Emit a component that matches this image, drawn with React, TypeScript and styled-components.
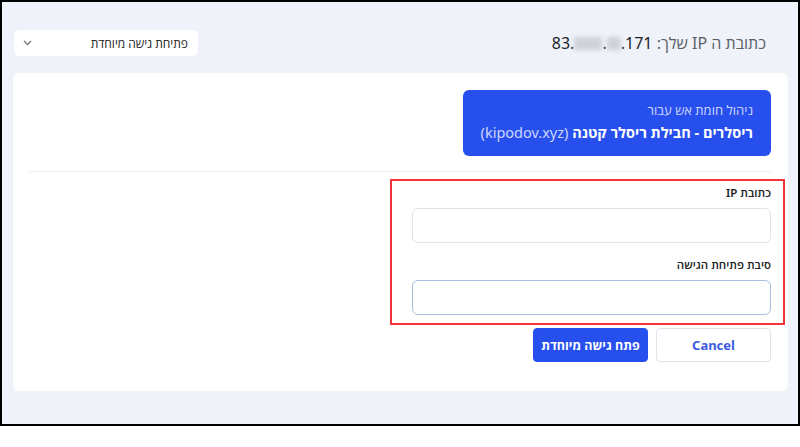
import React from 'react';
import styled, { createGlobalStyle } from 'styled-components';

const GlobalStyle = createGlobalStyle`
  html, body {
    margin: 0;
    padding: 0;
    background: #ffffff;
  }
  * {
    box-sizing: border-box;
  }
  body {
    font-family: "Noto Sans", "Open Sans", "DejaVu Sans", sans-serif;
  }
`;

const Frame = styled.div`
  width: 800px;
  height: 426px;
  border: 2px solid #000;
  background: #eff2f9;
  padding: 28px 10px 0 11px;
  display: flex;
  flex-direction: column;
  gap: 17px;
`;

const TopBar = styled.div`
  display: flex;
  align-items: center;
  justify-content: space-between;
  height: 26px;
  padding-right: 22px;
`;

const IpLine = styled.div`
  font-size: 16px;
  color: #5b5f66;
  white-space: nowrap;
  .value {
    color: #1f2329;
    unicode-bidi: isolate;
  }
`;

const Blur = styled.span<{ $w: number }>`
  display: inline-block;
  width: ${(p) => p.$w}px;
  height: 13px;
  background: #cfd2d8;
  filter: blur(2px);
  vertical-align: -1px;
`;

const Dropdown = styled.div`
  width: 184px;
  height: 26px;
  margin-left: 1px;
  background: #fff;
  border-radius: 5px;
  display: flex;
  align-items: center;
  justify-content: space-between;
  padding: 0 10px 0 9px;
  font-size: 12px;
  font-weight: 500;
  color: #222;
`;

const Card = styled.div`
  background: #fff;
  border-radius: 6px;
  height: 318px;
  padding: 17px 17px 0 16px;
  display: flex;
  flex-direction: column;
`;

const Banner = styled.div`
  align-self: flex-start;
  width: 308px;
  height: 66px;
  background: #274fee;
  border-radius: 6px;
  padding: 12px 18px 0;
  color: #fff;
  display: flex;
  flex-direction: column;
  gap: 4px;
`;

const BannerSub = styled.div`
  font-size: 13px;
  color: #cdd7ff;
  line-height: 17px;
`;

const BannerTitle = styled.div`
  font-size: 14.5px;
  font-weight: 700;
  line-height: 18px;
  white-space: nowrap;
  .domain {
    font-weight: 400;
    color: #cdd7ff;
  }
`;

const Divider = styled.hr`
  border: 0;
  border-top: 1px solid #eceef2;
  margin: 15px 0 0;
`;

const Form = styled.div`
  position: relative;
  align-self: flex-start;
  width: 359px;
  margin-top: 14px;
  display: flex;
  flex-direction: column;
`;

const Highlight = styled.div`
  position: absolute;
  top: -7px;
  right: -14px;
  left: -22px;
  height: 146px;
  border: 2px solid #f2333a;
  pointer-events: none;
`;

const Label = styled.label`
  font-size: 11.5px;
  font-weight: 600;
  color: #222;
  line-height: 14px;
  margin-bottom: 8px;
`;

const Input = styled.input<{ $focused?: boolean }>`
  height: 35px;
  width: 100%;
  border: 1px solid ${(p) => (p.$focused ? '#a7bfe2' : '#dfe4ec')};
  border-radius: 6px;
  margin-bottom: 15px;
  outline: none;
  font: inherit;
`;

const Buttons = styled.div`
  display: flex;
  gap: 8px;
  margin-top: -2px;
`;

const Button = styled.button<{ $primary?: boolean }>`
  width: 115px;
  height: 34px;
  border-radius: 4px;
  font-family: inherit;
  font-weight: 700;
  font-size: ${(p) => (p.$primary ? '12.5px' : '13px')};
  background: ${(p) => (p.$primary ? '#274fee' : '#fff')};
  color: ${(p) => (p.$primary ? '#fff' : '#3d5be0')};
  border: 1px solid ${(p) => (p.$primary ? '#274fee' : '#dfe3ee')};
  cursor: pointer;
`;

const Chevron = () => (
  <svg width="9" height="6" viewBox="0 0 9 6" fill="none">
    <path d="M1 1l3.5 3.5L8 1" stroke="#777" strokeWidth="1.3" />
  </svg>
);

export default function App() {
  return (
    <>
      <GlobalStyle />
      <Frame dir="rtl">
        <TopBar>
          <IpLine>
            כתובת ה IP שלך:{' '}
            <span className="value" dir="ltr">
              83.<Blur $w={28} />.<Blur $w={14} />.171
            </span>
          </IpLine>
          <Dropdown>
            <span>פתיחת גישה מיוחדת</span>
            <Chevron />
          </Dropdown>
        </TopBar>
        <Card>
          <Banner>
            <BannerSub>ניהול חומת אש עבור</BannerSub>
            <BannerTitle>
              ריסלרים - חבילת ריסלר קטנה <span className="domain">(kipodov.xyz)</span>
            </BannerTitle>
          </Banner>
          <Divider />
          <Form>
            <Highlight />
            <Label>כתובת IP</Label>
            <Input />
            <Label>סיבת פתיחת הגישה</Label>
            <Input $focused />
            <Buttons>
              <Button>Cancel</Button>
              <Button $primary>פתח גישה מיוחדת</Button>
            </Buttons>
          </Form>
        </Card>
      </Frame>
    </>
  );
}
